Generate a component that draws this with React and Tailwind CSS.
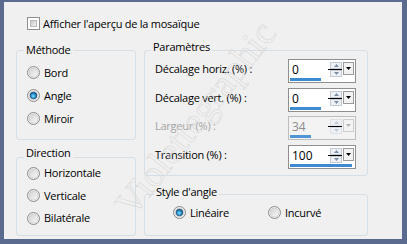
import React from "react";

const FONT = { fontFamily: '"Open Sans", "Noto Sans", "Liberation Sans", sans-serif' };

function Radio({ checked }) {
  return (
    <svg width="13" height="13" viewBox="0 0 13 13" className="shrink-0">
      <defs>
        <linearGradient id="rg" x1="0" y1="0" x2="1" y2="1">
          <stop offset="0" stopColor="#d0d0d0" />
          <stop offset="1" stopColor="#fafafa" />
        </linearGradient>
        <radialGradient id="rb" cx="0.45" cy="0.6" r="0.6">
          <stop offset="0" stopColor="#8fe0ff" />
          <stop offset="0.5" stopColor="#2c9bd8" />
          <stop offset="1" stopColor="#11507f" />
        </radialGradient>
      </defs>
      <circle cx="6.5" cy="6.5" r="6" fill="#f4f4f4" stroke="#8a8a8a" strokeWidth="1" />
      <circle cx="6.5" cy="6.5" r="4.5" fill="url(#rg)" stroke="#cacaca" strokeWidth="0.8" />
      {checked && <circle cx="6.5" cy="6.5" r="3.3" fill="url(#rb)" stroke="#1a4e7a" strokeWidth="0.8" />}
    </svg>
  );
}

function RadioRow({ label, checked, h = "h-[23px]" }) {
  return (
    <div className={`flex items-center gap-[4px] ${h}`}>
      <Radio checked={checked} />
      <span className="text-[11px] tracking-[-0.25px] text-black leading-none pb-[1px]">{label}</span>
    </div>
  );
}

function Spinner({ value, pct, disabled }) {
  const arrow = disabled ? "#c4cad3" : "#7d8fa8";
  return (
    <div className={`w-[68px] h-[24px] border ${disabled ? "border-[#bdbdbd] bg-[#f3f3f3]" : "border-[#8f8f8f] bg-white"} flex flex-col`}>
      <div className="h-[18px] flex">
        <div className={`flex-1 pl-[3px] pt-[3px] text-[12px] leading-[13px] ${disabled ? "text-[#8c8c8c]" : "text-black"}`}>{value}</div>
        <div className="w-[12px] mt-[2px] flex flex-col">
          <div className={`h-[7px] border ${disabled ? "border-[#dde0e5]" : "border-[#c3c9d2]"} bg-[#eef1f5] flex items-center justify-center`}>
            <svg width="5" height="3" viewBox="0 0 5 3"><path d="M2.5 0 L5 3 L0 3 Z" fill={arrow} /></svg>
          </div>
          <div className="h-[1px] bg-black -ml-[2px]" />
          <div className={`h-[7px] border ${disabled ? "border-[#dde0e5]" : "border-[#c3c9d2]"} bg-[#eef1f5] flex items-center justify-center`}>
            <svg width="5" height="3" viewBox="0 0 5 3"><path d="M0 0 L5 0 L2.5 3 Z" fill={arrow} /></svg>
          </div>
        </div>
        <div className={`w-[11px] h-[13px] mt-[2px] ml-[1px] mr-[1px] border ${disabled ? "border-[#cdcdcd] bg-[#f3f3f3]" : "border-[#9a9a9a] bg-[#f2f2f2]"} flex items-center justify-center`}>
          <svg width="5" height="3" viewBox="0 0 5 3"><path d="M0 0 L5 0 L2.5 3 Z" fill={disabled ? "#b4b4b4" : "#000"} /></svg>
        </div>
      </div>
      <div className="h-[3px] ml-[1px] w-[62px]">
        <div className={`h-full ${disabled ? "bg-[#4f95d6]" : "bg-[#3d8ad0]"}`} style={{ width: `${pct}%` }} />
      </div>
    </div>
  );
}

function ParamRow({ label, value, pct, disabled }) {
  return (
    <div className="flex items-center justify-between h-[28.5px] pl-[10px] pr-[11px]">
      <span className={`text-[11px] tracking-[-0.25px] leading-none pb-[5px] ${disabled ? "text-[#a3a3a3]" : "text-black"}`}>{label}</span>
      <Spinner value={value} pct={pct} disabled={disabled} />
    </div>
  );
}

function Group({ title, className, children, labelClass = "left-[7px]" }) {
  return (
    <div className={`relative border border-[#d5dfe5] rounded-[3px] ${className}`}>
      <div className={`absolute -top-[9px] px-[2px] bg-[#f0f0f0] text-[11px] tracking-[-0.25px] leading-[16px] text-black ${labelClass}`}>{title}</div>
      {children}
    </div>
  );
}

export default function App() {
  return (
    <div className="w-[407px] h-[244px] bg-[#5b6a8f] pt-[2px] pl-[4px] pr-[5px] pb-[5px] flex" style={FONT}>
      <div className="relative flex-1 bg-[#f0f0f0] overflow-hidden">
        <div className="flex items-center gap-[3px] pl-[23px] pt-[15px] h-[28px]">
          <div className="w-[13px] h-[13px] border border-[#8e8f8f] bg-white p-[2px]">
            <div className="w-full h-full bg-gradient-to-br from-[#c8c8c8] to-[#f4f4f4] border border-[#b9b9b9]" />
          </div>
          <span className="text-[11px] tracking-[-0.25px] leading-none text-black pb-[1px]">Afficher l'aperçu de la mosaïque</span>
        </div>
        <div className="flex gap-[8px] pl-[12px] pt-[20px]">
          <div className="w-[120px] flex flex-col gap-[17px]">
            <Group title="Méthode" className="h-[90px] pt-[10px] pl-[10px]">
              <RadioRow label="Bord" />
              <RadioRow label="Angle" checked />
              <RadioRow label="Miroir" />
            </Group>
            <Group title="Direction" className="h-[79px] pt-[4px] pl-[10px]" labelClass="left-[7px] -top-[13px]">
              <RadioRow label="Horizontale" h="h-[22.5px]" />
              <RadioRow label="Verticale" h="h-[22.5px]" />
              <RadioRow label="Bilatérale" h="h-[22.5px]" />
            </Group>
          </div>
          <div className="w-[224px] flex flex-col gap-[18px]">
            <Group title="Paramètres" className="h-[126px] pt-[6px]" labelClass="left-[6px] -top-[12px]">
              <ParamRow label="Décalage horiz. (%) :" value="0" pct={50} />
              <ParamRow label="Décalage vert. (%) :" value="0" pct={50} />
              <ParamRow label="Largeur (%) :" value="34" pct={34} disabled />
              <ParamRow label="Transition (%) :" value="100" pct={100} />
            </Group>
            <Group title="Style d'angle" className="h-[42px] pt-[6px]" labelClass="left-[9px] -top-[11px]">
              <div className="flex items-center pl-[28px]">
                <div className="w-[95px]"><RadioRow label="Linéaire" checked /></div>
                <RadioRow label="Incurvé" />
              </div>
            </Group>
          </div>
        </div>
        <div
          className="pointer-events-none absolute left-[31px] top-[96px] w-[320px] text-center text-[38px] leading-[40px] text-transparent [-webkit-text-stroke:0.5px_#d6d6d6] rotate-[-52deg]"
          style={{ fontFamily: '"Liberation Serif", serif' }}
          aria-hidden="true"
        >
          Violettegraphic
        </div>
      </div>
    </div>
  );
}
